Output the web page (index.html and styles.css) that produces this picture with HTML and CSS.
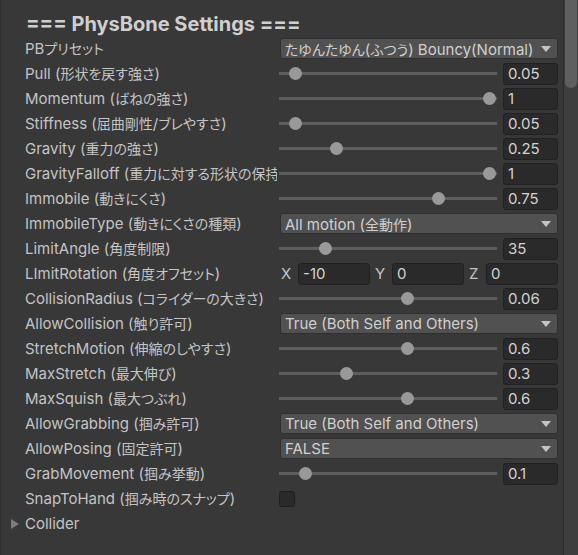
FILE: index.html
```html
<!DOCTYPE html>
<html lang="ja">
<head>
<meta charset="utf-8">
<link rel="stylesheet" href="styles.css">
</head>
<body>
<div class="panel">
  <div class="content">
    <div class="title">=== PhysBone Settings ===</div>

    <div class="row"><div class="label">PB<span class="ja">プリセット</span></div><div class="ctrl"><div class="dropdown"><span><span class="ja">たゆんたゆん</span>(<span class="ja">ふつう</span>) Bouncy(Normal)</span><i class="arrow"></i></div></div></div>

    <div class="row"><div class="label">Pull (<span class="ja">形状を戻す強さ</span>)</div><div class="ctrl slider"><div class="track"><div class="rail"><span class="thumb" style="left:5%"></span></div></div><div class="field">0.05</div></div></div>

    <div class="row"><div class="label">Momentum (<span class="ja">ばねの強さ</span>)</div><div class="ctrl slider"><div class="track"><div class="rail"><span class="thumb" style="left:100%"></span></div></div><div class="field">1</div></div></div>

    <div class="row"><div class="label">Stiffness (<span class="ja">屈曲剛性</span>/<span class="ja">ブレやすさ</span>)</div><div class="ctrl slider"><div class="track"><div class="rail"><span class="thumb" style="left:5%"></span></div></div><div class="field">0.05</div></div></div>

    <div class="row"><div class="label">Gravity (<span class="ja">重力の強さ</span>)</div><div class="ctrl slider"><div class="track"><div class="rail"><span class="thumb" style="left:25%"></span></div></div><div class="field">0.25</div></div></div>

    <div class="row"><div class="label">GravityFalloff (<span class="ja">重力に対する形状の保持率</span>)</div><div class="ctrl slider"><div class="track"><div class="rail"><span class="thumb" style="left:100%"></span></div></div><div class="field">1</div></div></div>

    <div class="row"><div class="label">Immobile (<span class="ja">動きにくさ</span>)</div><div class="ctrl slider"><div class="track"><div class="rail"><span class="thumb" style="left:75%"></span></div></div><div class="field">0.75</div></div></div>

    <div class="row"><div class="label">ImmobileType (<span class="ja">動きにくさの種類</span>)</div><div class="ctrl"><div class="dropdown"><span>All motion (<span class="ja">全動作</span>)</span><i class="arrow"></i></div></div></div>

    <div class="row"><div class="label">LimitAngle (<span class="ja">角度制限</span>)</div><div class="ctrl slider"><div class="track"><div class="rail"><span class="thumb" style="left:19.4%"></span></div></div><div class="field">35</div></div></div>

    <div class="row"><div class="label">LImitRotation (<span class="ja">角度オフセット</span>)</div><div class="ctrl vector">
      <div class="axis"><span class="axis-label">X</span><div class="field">-10</div></div>
      <div class="axis"><span class="axis-label">Y</span><div class="field">0</div></div>
      <div class="axis"><span class="axis-label">Z</span><div class="field">0</div></div>
    </div></div>

    <div class="row"><div class="label">CollisionRadius (<span class="ja">コライダーの大きさ</span>)</div><div class="ctrl slider"><div class="track"><div class="rail"><span class="thumb" style="left:60%"></span></div></div><div class="field">0.06</div></div></div>

    <div class="row"><div class="label">AllowCollision (<span class="ja">触り許可</span>)</div><div class="ctrl"><div class="dropdown"><span>True (Both Self and Others)</span><i class="arrow"></i></div></div></div>

    <div class="row"><div class="label">StretchMotion (<span class="ja">伸縮のしやすさ</span>)</div><div class="ctrl slider"><div class="track"><div class="rail"><span class="thumb" style="left:60%"></span></div></div><div class="field">0.6</div></div></div>

    <div class="row"><div class="label">MaxStretch (<span class="ja">最大伸び</span>)</div><div class="ctrl slider"><div class="track"><div class="rail"><span class="thumb" style="left:30%"></span></div></div><div class="field">0.3</div></div></div>

    <div class="row"><div class="label">MaxSquish (<span class="ja">最大つぶれ</span>)</div><div class="ctrl slider"><div class="track"><div class="rail"><span class="thumb" style="left:60%"></span></div></div><div class="field">0.6</div></div></div>

    <div class="row"><div class="label">AllowGrabbing (<span class="ja">掴み許可</span>)</div><div class="ctrl"><div class="dropdown"><span>True (Both Self and Others)</span><i class="arrow"></i></div></div></div>

    <div class="row"><div class="label">AllowPosing (<span class="ja">固定許可</span>)</div><div class="ctrl"><div class="dropdown"><span>FALSE</span><i class="arrow"></i></div></div></div>

    <div class="row"><div class="label">GrabMovement (<span class="ja">掴み挙動</span>)</div><div class="ctrl slider"><div class="track"><div class="rail"><span class="thumb" style="left:10%"></span></div></div><div class="field">0.1</div></div></div>

    <div class="row"><div class="label">SnapToHand (<span class="ja">掴み時のスナップ</span>)</div><div class="ctrl"><div class="checkbox"></div></div></div>

    <div class="row foldout"><i class="fold-arrow"></i><div class="label">Collider</div></div>
  </div>
  <div class="scrollbar"><div class="scroll-thumb"></div></div>
</div>
</body>
</html>
```

FILE: styles.css
```css
html, body {
  margin: 0;
  padding: 0;
  background: #383838;
}
body {
  font-family: Inter, "Noto Sans CJK JP", sans-serif;
  font-size: 15px;
  color: #c4c4c4;
  overflow: hidden;
}
.ja {
  font-size: 14px;
  font-feature-settings: "palt";
}
.panel {
  display: flex;
  width: 578px;
  height: 555px;
  border-left: 1px solid #303030;
  box-sizing: border-box;
}
.content {
  flex: 1;
  padding-right: 5px;
}
.title {
  height: 36px;
  box-sizing: border-box;
  padding-left: 25px;
  padding-top: 13px;
  font-size: 20px;
  font-weight: 700;
  line-height: 23px;
  color: #cfcfcf;
  white-space: nowrap;
}
.row {
  display: flex;
  align-items: center;
  height: 25px;
}
.label {
  width: 252px;
  margin-left: 24px;
  margin-right: 3px;
  white-space: nowrap;
  overflow: hidden;
  line-height: 19px;
}
.ctrl {
  flex: 1;
  display: flex;
  align-items: center;
}
.dropdown {
  flex: 1;
  height: 21px;
  box-sizing: border-box;
  display: flex;
  align-items: center;
  justify-content: space-between;
  padding: 0 6px 0 4px;
  background: #515151;
  border: 1px solid #2f2f2f;
  border-radius: 3px;
  color: #d0d0d0;
  white-space: nowrap;
}
.arrow {
  width: 0;
  height: 0;
  border-left: 5px solid transparent;
  border-right: 5px solid transparent;
  border-top: 6px solid #c4c4c4;
}
.slider {
  gap: 6px;
}
.track {
  flex: 1;
  margin-left: -1px;
  padding: 0 8px 0 6px;
  height: 13px;
  display: flex;
  align-items: center;
  background: linear-gradient(#5e5e5e, #5e5e5e) no-repeat center / 100% 3px;
}
.rail {
  position: relative;
  flex: 1;
  height: 13px;
}
.thumb {
  position: absolute;
  top: 0;
  width: 13px;
  height: 13px;
  margin-left: -6px;
  border-radius: 50%;
  background: #999999;
}
.field {
  width: 55px;
  height: 22px;
  box-sizing: border-box;
  padding-left: 4px;
  display: flex;
  align-items: center;
  background: #2a2a2a;
  border: 1px solid #212121;
  border-radius: 3px;
  color: #d2d2d2;
}
.vector {
  display: grid;
  grid-template-columns: 1fr 1fr 1fr;
  gap: 4px;
}
.axis {
  display: flex;
  align-items: center;
}
.axis-label {
  width: 18px;
  padding-left: 1px;
  box-sizing: border-box;
}
.axis .field {
  flex: 1;
}
.checkbox {
  width: 16px;
  height: 16px;
  margin-left: -1px;
  box-sizing: border-box;
  background: #2a2a2a;
  border: 1px solid #1f1f1f;
  border-radius: 3px;
}
.foldout {
  position: relative;
}
.fold-arrow {
  position: absolute;
  left: 10px;
  top: 8px;
  width: 0;
  height: 0;
  border-top: 5px solid transparent;
  border-bottom: 5px solid transparent;
  border-left: 8px solid #7d7d7d;
}
.scrollbar {
  width: 15px;
  background: #3e3e3e;
  border-left: 1px solid #2b2b2b;
  box-sizing: border-box;
  padding-left: 1px;
}
.scroll-thumb {
  width: 12px;
  height: 88px;
  background: #5f5f5f;
  border-radius: 0 0 6px 6px;
}
```
